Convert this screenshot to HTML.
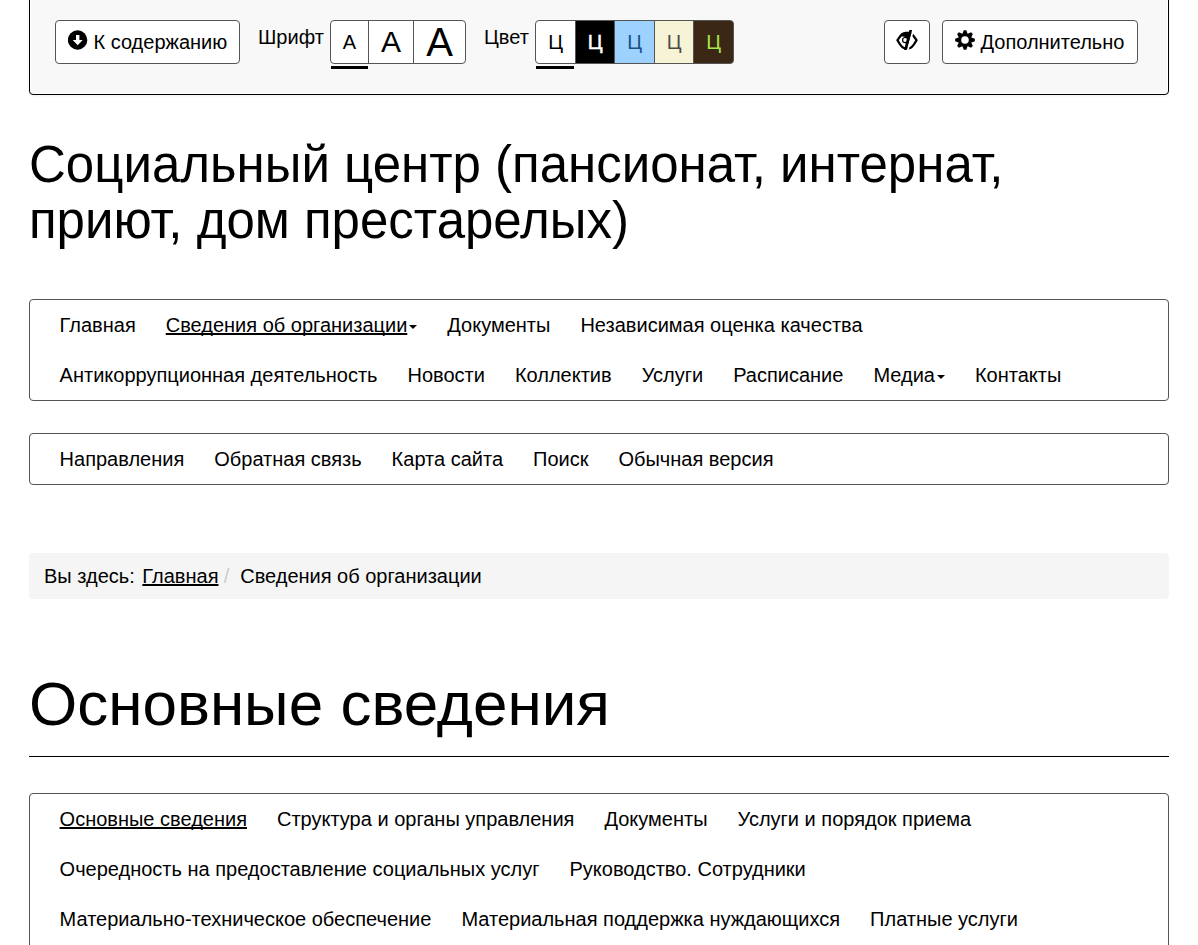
<!DOCTYPE html>
<html lang="ru">
<head>
<meta charset="utf-8">
<title>Основные сведения</title>
<style>
*{box-sizing:border-box}
html,body{margin:0;padding:0}
body{width:1198px;height:945px;overflow:hidden;background:#fff;color:#000;font-family:"Liberation Sans",Arial,sans-serif;font-size:20px;line-height:1.5;position:relative}
a{color:#000;text-decoration:none;text-decoration-skip-ink:none}
span{text-decoration-skip-ink:none}
.wrap{position:absolute;left:29px;width:1140px}
.panel{top:-21px;height:116px;background:#f8f8f8;border:1px solid #000;border-radius:0 0 4px 4px;box-shadow:inset 0 0 0 1px rgba(255,255,255,.9),0 1px 3px rgba(0,0,0,.06)}
.btn{position:absolute;top:40px;height:44px;border:1px solid #555;border-radius:4px;background:#fff;padding:6px 12px;line-height:30px;font-size:20px;white-space:nowrap}
.ic{position:absolute;left:12px;top:9px}
.lbl{position:absolute;top:42px;line-height:30px}
.grp{position:absolute;top:40px;height:44px;display:flex;border:1px solid #555;border-radius:4px;overflow:hidden;background:#fff}
.grp span{display:block;height:42px;line-height:42px;text-align:center}
.cg{position:absolute;top:40px;height:44px;white-space:nowrap;font-size:0}
.cg span{display:inline-block;height:44px;padding:6px 11.85px;line-height:30px;font-size:20px;border:1px solid #555;margin-left:-1px}
.ul{position:absolute;height:3px;background:#000;top:86px}
h1{margin:0;font-weight:normal}
.title{top:137px;font-size:51px;line-height:56px}
.nav{border:1px solid #555;border-radius:4px;padding:0 15px 0 14.6px;display:flex;flex-wrap:wrap}
.nav a{display:block;padding:10px 15px;line-height:30px;white-space:nowrap}
.nav a.act{text-decoration:underline}
.caret{display:inline-block;width:0;height:0;margin-left:2px;vertical-align:middle;border-top:4px solid #000;border-right:4px solid transparent;border-left:4px solid transparent}
.bc{top:553px;height:46px;background:#f5f5f5;border-radius:4px;padding:8px 15px;line-height:30px}
.bc a{text-decoration:underline}
.bc .sep{color:#ccc;padding:0 5.3px}
.h1{top:668px;font-size:62px;line-height:72px}
.hr{top:756px;height:1px;background:#000}
</style>
</head>
<body>
<div class="wrap panel">
  <div class="btn" style="left:25px;width:185px"><svg class="ic" width="20" height="20" viewBox="0 0 20 20"><circle cx="9.6" cy="10" r="9.7" fill="#000"/><path d="M8 4.9h3.4v5.1h3.3L9.7 15.3 4.7 10H8z" fill="#fff"/></svg><span style="margin-left:25.5px">К содержанию</span></div>
  <div class="lbl" style="left:228px">Шрифт</div>
  <div class="grp" style="left:300px;width:136px"><span style="width:37px;font-size:20px">А</span><span style="width:45px;font-size:30px;border-left:1px solid #555">А</span><span style="width:52px;font-size:40px;border-left:1px solid #555">А</span></div>
  <div class="ul" style="left:301px;width:37px"></div>
  <div class="lbl" style="left:454px">Цвет</div>
  <div class="cg" style="left:506.4px"><span style="background:#fff;color:#000;border-radius:4px 0 0 4px">Ц</span><span style="background:#000;color:#fff;-webkit-text-stroke:.5px #fff">Ц</span><span style="background:#9dd1ff;color:#195183">Ц</span><span style="background:#f7f3d6;color:#4d4b43">Ц</span><span style="background:#3b2716;color:#a9e44d;border-radius:0 4px 4px 0">Ц</span></div>
  <div class="ul" style="left:506px;width:38px"></div>
  <div class="btn" style="left:854px;width:46px"><svg class="ic" style="left:11px" width="22" height="20" viewBox="0 0 22 20"><defs><clipPath id="cl"><polygon points="-2,-2 16.7,-2 10.8,20 10.5,22 -2,22"/></clipPath><clipPath id="cr"><polygon points="18.64,-2 24,-2 24,22 12.2,22"/></clipPath></defs><g clip-path="url(#cl)"><path d="M1.5,10.2 C3.5,7.2 5.5,3 9.5,3 L12.5,3 C16.5,3 18.5,7.2 20.5,10.2 C18.5,13.6 16.5,18.4 12.5,18.4 L9.5,18.4 C5.5,18.4 3.5,13.6 1.5,10.2Z" fill="#fff" stroke="#000" stroke-width="2.3"/><path d="M5.6,6.3 L8.2,3 L15.4,3 L12.7,13.2 L9.2,13.2 L9.2,7Z" fill="#000"/><circle cx="9.2" cy="10.1" r="3.2" fill="#000"/><circle cx="9.1" cy="10" r="1.9" fill="#fff"/></g><polygon points="13.4,-0.15 16.2,-0.15 10.8,20 8,20" fill="#000"/><g clip-path="url(#cr)"><path d="M1.5,10.2 C3.5,7.2 5.5,3 9.5,3 L12.5,3 C16.5,3 18.5,7.2 20.5,10.2 C18.5,13.6 16.5,18.4 12.5,18.4 L9.5,18.4 C5.5,18.4 3.5,13.6 1.5,10.2Z" fill="none" stroke="#000" stroke-width="2.3"/></g></svg></div>
  <div class="btn" style="left:912px;width:196px"><svg class="ic" width="20" height="20" viewBox="0 0 20 20"><path d="M7.50,3.57 L8.72,0.18 L11.28,0.18 L12.50,3.57 L12.78,3.69 L16.03,2.15 L17.85,3.97 L16.31,7.22 L16.43,7.50 L19.82,8.72 L19.82,11.28 L16.43,12.50 L16.31,12.78 L17.85,16.03 L16.03,17.85 L12.78,16.31 L12.50,16.43 L11.28,19.82 L8.72,19.82 L7.50,16.43 L7.22,16.31 L3.97,17.85 L2.15,16.03 L3.69,12.78 L3.57,12.50 L0.18,11.28 L0.18,8.72 L3.57,7.50 L3.69,7.22 L2.15,3.97 L3.97,2.15 L7.22,3.69Z" fill="#000"/><circle cx="10" cy="10" r="3.8" fill="#fff"/></svg><span style="margin-left:25.5px">Дополнительно</span></div>
</div>
<h1 class="wrap title">Социальный центр (пансионат, интернат, приют, дом престарелых)</h1>
<div class="wrap nav" style="top:299px">
  <a>Главная</a><a><span style="text-decoration:underline">Сведения об организации</span><span class="caret"></span></a><a>Документы</a><a>Независимая оценка качества</a><a>Антикоррупционная деятельность</a><a>Новости</a><a>Коллектив</a><a>Услуги</a><a>Расписание</a><a>Медиа<span class="caret"></span></a><a>Контакты</a>
</div>
<div class="wrap nav" style="top:433px">
  <a>Направления</a><a>Обратная связь</a><a>Карта сайта</a><a>Поиск</a><a>Обычная версия</a>
</div>
<div class="wrap bc"><span style="margin-right:2px">Вы здесь:</span> <a>Главная</a><span class="sep">/</span> Сведения об организации</div>
<h1 class="wrap h1">Основные сведения</h1>
<div class="wrap hr"></div>
<div class="wrap nav" style="top:793px;height:200px;align-content:flex-start">
  <a class="act">Основные сведения</a><a>Структура и органы управления</a><a>Документы</a><a>Услуги и порядок приема</a><a>Очередность на предоставление социальных услуг</a><a>Руководство. Сотрудники</a><a>Материально-техническое обеспечение</a><a>Материальная поддержка нуждающихся</a><a>Платные услуги</a>
</div>
</body>
</html>
